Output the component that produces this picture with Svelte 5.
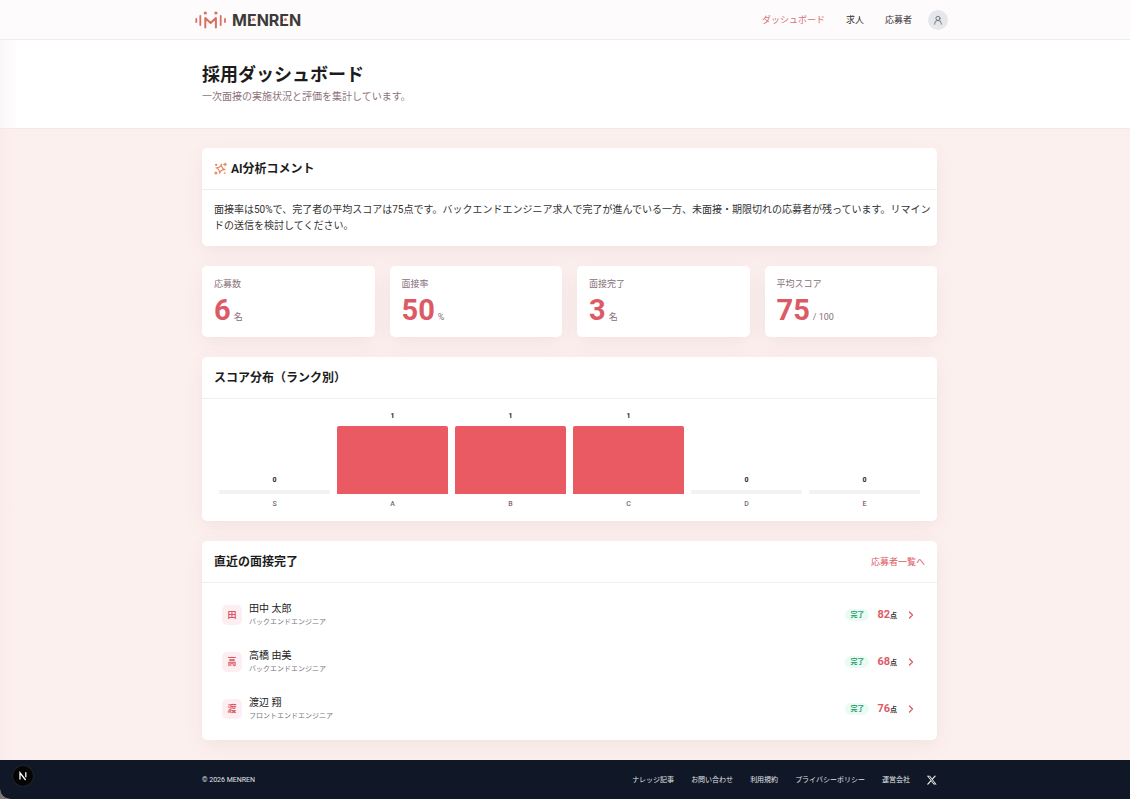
<script lang="ts">
    const navLinks = [
        { label: "ダッシュボード", active: true },
        { label: "求人", active: false },
        { label: "応募者", active: false },
    ];

    const stats = [
        { label: "応募数", value: "6", unit: "名" },
        { label: "面接率", value: "50", unit: "%" },
        { label: "面接完了", value: "3", unit: "名" },
        { label: "平均スコア", value: "75", unit: "/ 100" },
    ];

    const ranks = [
        { rank: "S", count: 0 },
        { rank: "A", count: 1 },
        { rank: "B", count: 1 },
        { rank: "C", count: 1 },
        { rank: "D", count: 0 },
        { rank: "E", count: 0 },
    ];

    const maxCount = Math.max(...ranks.map((r) => r.count));
    const barMax = 68;

    function barHeight(count: number) {
        return count === 0 ? 4 : (count / maxCount) * barMax;
    }

    const interviews = [
        { name: "田中 太郎", role: "バックエンドエンジニア", score: 82 },
        { name: "高橋 由美", role: "バックエンドエンジニア", score: 68 },
        { name: "渡辺 翔", role: "フロントエンドエンジニア", score: 76 },
    ];

    const footerLinks = ["ナレッジ記事", "お問い合わせ", "利用規約", "プライバシーポリシー", "運営会社"];
</script>

<div class="page">
    <header class="topbar">
        <div class="topbar-inner">
            <a class="logo" href="#top">
                <svg width="32" height="20" viewBox="0 0 32 20" fill="none" stroke="#d9705f" stroke-width="1.8" stroke-linecap="round" aria-hidden="true">
                    <path d="M1.3 9v3M5.3 6v9M25.7 6v9M30 9v3" />
                    <path d="M10.3 17.5V8l5.3 5 5.300-5v9.500" stroke-width="2" stroke-linejoin="round" />
                    <circle cx="10.3" cy="3" r="1.600" fill="#d9705f" stroke="none" />
                    <circle cx="20.9" cy="3" r="1.600" fill="#d9705f" stroke="none" />
                </svg>
                <span class="wordmark">M<span class="dot-e">E</span>NR<span class="dot-e">E</span>N</span>
            </a>
            <nav class="nav">
                {#each navLinks as link}
                    <a href="#top" class:active={link.active}>{link.label}</a>
                {/each}
            </nav>
            <button class="account" aria-label="アカウント">
                <svg width="10" height="10" viewBox="0 0 24 24" fill="none" stroke="#6b6f78" stroke-width="2.2" stroke-linecap="round" stroke-linejoin="round">
                    <circle cx="12" cy="8" r="5" />
                    <path d="M4 22v-1a8 8 0 0 1 16 0v1" />
                </svg>
            </button>
        </div>
    </header>

    <section class="hero">
        <div class="container">
            <h1>採用ダッシュボード</h1>
            <p>一次面接の実施状況と評価を集計しています。</p>
        </div>
    </section>

    <main>
        <div class="container stack">
            <section class="card">
                <div class="card-head">
                    <h2>
                        <svg width="13" height="13" viewBox="0 0 24 24" fill="none" stroke="#e58a68" stroke-width="2.2" stroke-linecap="round" stroke-linejoin="round" aria-hidden="true">
                            <path transform="rotate(12 12 12.500)" d="M12 4c.8 5.500 3 7.700 8.500 8.500-5.500.8-7.700 3-8.500 8.500-.8-5.500-3-7.700-8.500-8.500 5.500-.8 7.700-3 8.500-8.500z" />
                            <path d="M20.500 2v5M18 4.500h5" />
                            <circle cx="4" cy="5.500" r="1" fill="#e58a68" />
                            <circle cx="3.500" cy="20.500" r="1.700" />
                            <circle cx="20" cy="20.500" r=".6" fill="#e58a68" />
                        </svg>
                        <span>AI分析コメント</span>
                    </h2>
                </div>
                <p class="comment">面接率は50%で、完了者の平均スコアは75点です。バックエンドエンジニア求人で完了が進んでいる一方、未面接・期限切れの応募者が残っています。リマインドの送信を検討してください。</p>
            </section>

            <section class="stats">
                {#each stats as stat}
                    <div class="card stat">
                        <div class="stat-label">{stat.label}</div>
                        <div class="stat-value">
                            <strong>{stat.value}</strong>
                            <span>{stat.unit}</span>
                        </div>
                    </div>
                {/each}
            </section>

            <section class="card">
                <div class="card-head">
                    <h2>スコア分布（ランク別）</h2>
                </div>
                <div class="chart">
                    {#each ranks as r}
                        <div class="col">
                            <span class="count">{r.count}</span>
                            <div class="bar" class:empty={r.count === 0} style="height: {barHeight(r.count)}px"></div>
                            <span class="rank">{r.rank}</span>
                        </div>
                    {/each}
                </div>
            </section>

            <section class="card">
                <div class="card-head">
                    <h2>直近の面接完了</h2>
                    <a class="more" href="#list">応募者一覧へ</a>
                </div>
                <div class="rows">
                    {#each interviews as item}
                        <a class="row" href="#detail">
                            <span class="avatar">{item.name[0]}</span>
                            <span class="who">
                                <span class="name">{item.name}</span>
                                <span class="role">{item.role}</span>
                            </span>
                            <span class="badge">完了</span>
                            <span class="score">{item.score}<small>点</small></span>
                            <svg width="12" height="12" viewBox="0 0 24 24" fill="none" stroke="#dc5a66" stroke-width="2.600" stroke-linecap="round" stroke-linejoin="round" aria-hidden="true">
                                <path d="M9 6l6 6-6 6" />
                            </svg>
                        </a>
                    {/each}
                </div>
            </section>
        </div>
    </main>

    <footer>
        <div class="container footer-inner">
            <span class="copy">© 2026 MENREN</span>
            {#each footerLinks as label}
                <a href="#footer">{label}</a>
            {/each}
            <a class="x-link" href="#x" aria-label="X">
                <svg width="10" height="10" viewBox="0 0 24 24" fill="#e8eaee">
                    <path d="M18.200 1.500h3.700l-8 9.200L23.300 22.500h-7.400l-5.800-7.500-6.600 7.500H-.2l8.600-9.800L-.6 1.500h7.600l5.200 6.900zM16.900 20.400h2L5.800 3.500H3.600z" />
                </svg>
            </a>
        </div>
    </footer>

    <button class="dev-badge" aria-label="Dev Tools">
        <svg width="10" height="10" viewBox="0 0 10 10" fill="none" stroke="#fff" stroke-width="1.300">
            <path d="M2 8.500V1.800L7.600 9M7.800 1.300v5" />
        </svg>
    </button>
</div>

<style>
    :global(body) {
        margin: 0;
        background: #7d7671;
    }

    .page {
        min-height: 100vh;
        display: flex;
        flex-direction: column;
        overflow: hidden;
        border-bottom-left-radius: 10px;
        background: #fcefed;
        color: #222;
        font-family: Roboto, "Noto Sans CJK JP", sans-serif;
    }

    a {
        color: inherit;
        text-decoration: none;
    }

    button {
        border: none;
        padding: 0;
        cursor: pointer;
    }

    svg {
        display: block;
        flex: none;
    }

    h1,
    h2,
    p {
        margin: 0;
    }

    .topbar,
    .hero,
    main,
    footer {
        padding-left: 9px;
    }

    .container {
        max-width: 735px;
        margin: 0 auto;
    }

    /* header */
    .topbar {
        background: #fefbfc;
        border-bottom: 1px solid #ececef;
    }

    .topbar-inner {
        max-width: 757px;
        height: 39px;
        margin: 0 auto;
        display: flex;
        align-items: center;
    }

    .logo {
        display: flex;
        align-items: center;
        gap: 5px;
        margin: 0 auto 0 4px;
    }

    .wordmark {
        font-family: Inter, sans-serif;
        font-size: 16px;
        line-height: 20px;
        font-weight: 700;
        color: #3c3a3b;
    }

    .dot-e {
        position: relative;
    }

    .dot-e::after {
        content: "";
        position: absolute;
        left: 5px;
        top: 8px;
        width: 3px;
        height: 3px;
        border-radius: 50%;
        background: #d9705f;
        box-shadow: 0 0 0 1px #fefbfc;
    }

    .nav {
        display: flex;
        gap: 21px;
        margin-right: 16px;
        font-size: 9px;
        line-height: 12px;
        color: #3c3436;
    }

    .nav .active {
        color: #d5707b;
    }

    .account {
        width: 20px;
        height: 20px;
        border-radius: 50%;
        background: #e5e7ea;
        display: grid;
        place-items: center;
    }

    /* hero */
    .hero {
        padding-top: 24px;
        padding-bottom: 23px;
        background: linear-gradient(90deg, #faf7f8, #fff 18px);
        border-bottom: 1px solid #f6e8e8;
    }

    h1 {
        font-size: 18px;
        line-height: 22px;
        font-weight: 700;
        color: #1c1c1c;
    }

    .hero p {
        margin-top: 3px;
        font-size: 10px;
        line-height: 16px;
        color: #8d7378;
    }

    /* cards */
    main {
        flex: 1;
        padding-top: 19px;
        padding-bottom: 20px;
        background: linear-gradient(90deg, #faecec, #fcf0ee 20px);
    }

    .stack {
        display: flex;
        flex-direction: column;
        gap: 20px;
    }

    .card {
        background: #fff;
        border-radius: 5px;
        box-shadow: 0 6px 20px rgba(110, 60, 60, .07);
    }

    .card-head {
        display: flex;
        align-items: center;
        justify-content: space-between;
        height: 41px;
        padding: 0 12px;
        border-bottom: 1px solid #f0eeef;
    }

    h2 {
        display: flex;
        align-items: center;
        gap: 4px;
        font-size: 12px;
        line-height: 18px;
        font-weight: 700;
        color: #1c1c1c;
    }

    .comment {
        padding: 12px 0 12px 12px;
        font-size: 10px;
        line-height: 16px;
        color: #333;
    }

    .stats {
        display: grid;
        grid-template-columns: repeat(4, 1fr);
        gap: 15px;
    }

    .stat {
        padding: 12px;
    }

    .stat-label {
        font-size: 9px;
        line-height: 12px;
        color: #87707a;
    }

    .stat-value {
        display: flex;
        align-items: baseline;
        gap: 3px;
        height: 30px;
        margin-top: 5px;
    }

    .stat-value strong {
        font-size: 29px;
        line-height: 30px;
        font-weight: 700;
        color: #dc5a66;
    }

    .stat-value span {
        font-size: 9px;
        line-height: 12px;
        color: #87707a;
    }

    .chart {
        display: grid;
        grid-template-columns: repeat(6, 1fr);
        gap: 7px;
        padding: 12px 17px;
    }

    .col {
        display: flex;
        flex-direction: column;
        justify-content: flex-end;
        gap: 5px;
        text-align: center;
        font-size: 7px;
        line-height: 10px;
    }

    .count {
        font-weight: 700;
        color: #222;
    }

    .rank {
        font-weight: 500;
        color: #75696e;
    }

    .bar {
        border-radius: 2px 2px 0 0;
        background: #e95a63;
    }

    .bar.empty {
        background: #f2f2f3;
    }

    .more {
        font-size: 9px;
        line-height: 12px;
        color: #dc5a66;
    }

    .rows {
        padding: 8px;
    }

    .row {
        display: flex;
        align-items: center;
        height: 47px;
        padding: 0 12px;
    }

    .avatar {
        width: 20px;
        height: 20px;
        margin-right: 7px;
        border-radius: 5px;
        background: #fdeff1;
        color: #dc5a66;
        font-size: 9px;
        line-height: 20px;
        font-weight: 700;
        text-align: center;
    }

    .who {
        flex: 1;
        display: flex;
        flex-direction: column;
    }

    .name {
        font-size: 10px;
        line-height: 14px;
    }

    .role {
        font-size: 7px;
        line-height: 12px;
        color: #77777d;
    }

    .badge {
        padding: 0 5px;
        border-radius: 6px;
        background: #e9fbf3;
        color: #1f9d6b;
        font-size: 7px;
        line-height: 12px;
        font-weight: 700;
    }

    .score {
        display: flex;
        align-items: baseline;
        margin: 0 8px;
        font-size: 11px;
        line-height: 14px;
        font-weight: 700;
        color: #dc5a66;
    }

    .score small {
        font-size: 7px;
        line-height: 12px;
        color: #333;
    }

    /* footer */
    footer {
        background: #101726;
        color: #e1e3e8;
        font-size: 7px;
        line-height: 12px;
    }

    .footer-inner {
        display: flex;
        align-items: center;
        gap: 17px;
        height: 39px;
    }

    .copy {
        margin-right: auto;
    }

    .dev-badge {
        position: fixed;
        left: 13px;
        bottom: 13px;
        width: 20px;
        height: 20px;
        border-radius: 50%;
        background: #050505;
        box-shadow: 0 0 0 1px #1d222b;
        display: grid;
        place-items: center;
    }
</style>
